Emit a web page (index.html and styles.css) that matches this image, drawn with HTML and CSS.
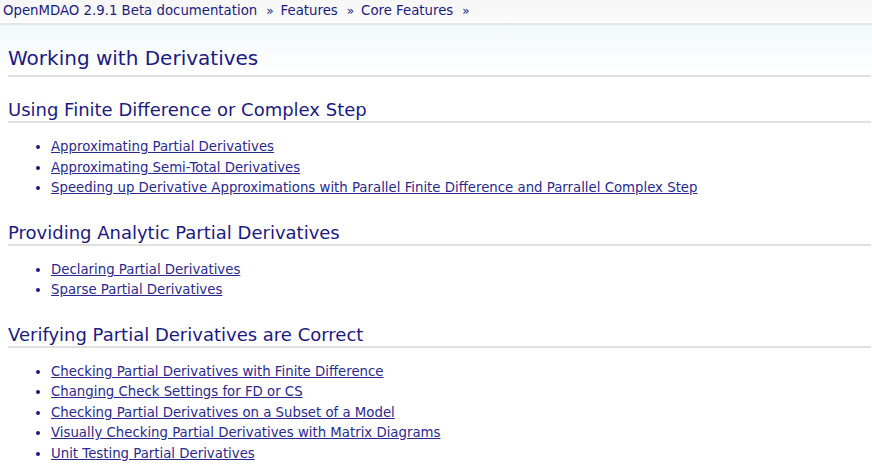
FILE: index.html
```html
<!DOCTYPE html>
<html>
<head>
<meta charset="utf-8">
<link rel="stylesheet" href="styles.css">
</head>
<body>
<div class="related">
  <a href="#">OpenMDAO 2.9.1 Beta documentation</a><span class="sep">»</span><a href="#">Features</a><span class="sep">»</span><a href="#">Core Features</a><span class="sep">»</span>
</div>
<div class="body">
  <h1>Working with Derivatives</h1>
  <h2>Using Finite Difference or Complex Step</h2>
  <ul>
    <li><a href="#">Approximating Partial Derivatives</a></li>
    <li><a href="#">Approximating Semi-Total Derivatives</a></li>
    <li><a href="#">Speeding up Derivative Approximations with Parallel Finite Difference and Parrallel Complex Step</a></li>
  </ul>
  <h2>Providing Analytic Partial Derivatives</h2>
  <ul>
    <li><a href="#">Declaring Partial Derivatives</a></li>
    <li><a href="#">Sparse Partial Derivatives</a></li>
  </ul>
  <h2>Verifying Partial Derivatives are Correct</h2>
  <ul>
    <li><a href="#">Checking Partial Derivatives with Finite Difference</a></li>
    <li><a href="#">Changing Check Settings for FD or CS</a></li>
    <li><a href="#">Checking Partial Derivatives on a Subset of a Model</a></li>
    <li><a href="#">Visually Checking Partial Derivatives with Matrix Diagrams</a></li>
    <li><a href="#">Unit Testing Partial Derivatives</a></li>
  </ul>
</div>
</body>
</html>
```
FILE: styles.css
```css
html, body {
  margin: 0;
  padding: 0;
}
body {
  font-family: "DejaVu Sans", sans-serif;
  color: #1a1a80;
  background: linear-gradient(#f2f8fa 26px, #ffffff 75px) no-repeat;
  background-color: #fff;
}
.related {
  height: 25px;
  box-sizing: border-box;
  padding: 1px 0 0 3px;
  font-size: 13.3px;
  line-height: 20px;
  background: linear-gradient(#f6f6f6, #fbfbfb);
  border-bottom: 2px solid #e6e6e6;
}
.related a {
  color: #1a1a80;
  text-decoration: none;
}
.related .sep {
  margin: 0 7px 0 9px;
  font-size: 12px;
}
.body {
  padding: 0 1px 0 8px;
}
h1 {
  margin: 0;
  padding: 21px 0 5px;
  font-size: 20px;
  font-weight: normal;
  line-height: 24px;
  color: #1a1a80;
  border-bottom: 2px solid #e0e0e0;
}
h2 {
  margin: 22px 0 0;
  padding: 0;
  font-size: 18px;
  font-weight: normal;
  line-height: 22px;
  color: #1a1a80;
  border-bottom: 2px solid #e0e0e0;
}
ul + h2 {
  margin-top: 23px;
}
ul {
  margin: 14px 0 0;
  padding-left: 43px;
}
li {
  font-size: 13.3px;
  line-height: 20.5px;
}
li a {
  color: #2a2a8e;
}
```
